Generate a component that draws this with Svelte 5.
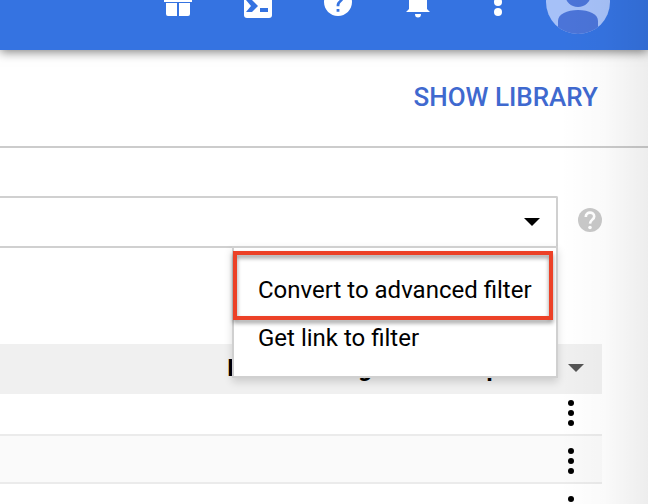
<script lang="ts">
  const rows = [1, 2, 3];
  const menuItems = ["Convert to advanced filter", "Get link to filter"];

  let filter = $state("");
  let menuOpen = $state(true);
</script>

<div class="page">
  <header class="topbar">
    <button class="icon-btn" aria-label="Gifts">
      <svg width="28" height="28" viewBox="0 0 28 28" fill="#fff">
        <path d="M0 6h28v8H0zM2 15h11v13H4a2 2 0 0 1-2-2zM15 15h11v11a2 2 0 0 1-2 2h-9z" />
        <path d="M14 5C11-1 5 0 7 5zM14 5c3-6 9-5 7 0z" />
      </svg>
    </button>
    <button class="icon-btn" aria-label="Cloud shell">
      <svg width="28" height="32" viewBox="0 0 28 32">
        <rect width="28" height="32" rx="3" fill="#fff" />
        <path d="M2 14h6l6 6-6 6H2l5-6z" fill="#3573e1" />
        <rect x="16" y="22" width="8" height="4" fill="#3573e1" />
      </svg>
    </button>
    <button class="icon-btn" aria-label="Help">
      <svg width="28" height="28" viewBox="2 2 20 20" fill="#fff">
        <path d="M12 2C6.480 2 2 6.480 2 12s4.480 10 10 10 10-4.480 10-10S17.520 2 12 2zm1 17h-2v-2h2v2zm2.070-7.750l-.9.920C13.450 12.900 13 13.500 13 15h-2v-.5c0-1.100.450-2.100 1.170-2.830l1.240-1.260c.370-.360.590-.860.590-1.410 0-1.100-.9-2-2-2s-2 .9-2 2H8c0-2.210 1.790-4 4-4s4 1.790 4 4c0 .880-.360 1.680-.930 2.250z" />
      </svg>
    </button>
    <button class="icon-btn" aria-label="Notifications">
      <svg width="24" height="32" viewBox="0 0 24 32" fill="#fff">
        <path d="M12 0a2 2 0 0 1 2 2v2c5 1 7 5 7 9v10l3 3H0l3-3V13c0-4 2-8 7-9V2a2 2 0 0 1 2-2zM9 28h6a3 3.500 0 0 1-6 0z" />
      </svg>
    </button>
    <button class="icon-btn" aria-label="More options">
      <svg width="8" height="28" viewBox="0 0 8 28" fill="#fff">
        <circle cx="4" cy="4" r="4" />
        <circle cx="4" cy="14" r="4" />
        <circle cx="4" cy="24" r="4" />
      </svg>
    </button>
    <button class="icon-btn" aria-label="Account">
      <svg width="64" height="64" viewBox="0 0 64 64">
        <clipPath id="avatar"><circle cx="32" cy="32" r="32" /></clipPath>
        <g clip-path="url(#avatar)">
          <rect width="64" height="64" fill="#a6c1f8" />
          <circle cx="32" cy="24" r="13" fill="#4b74d8" />
          <path d="M12 64V51c0-7 9-11 20-11s20 4 20 11v13z" fill="#4b74d8" />
        </g>
      </svg>
    </button>
  </header>

  <div class="actions">
    <button class="library">SHOW LIBRARY</button>
  </div>

  <div class="filter-row">
    <div class="field">
      <input type="text" aria-label="Filter" bind:value={filter} />
      <button
        class="toggle"
        aria-label="Filter options"
        aria-expanded={menuOpen}
        onclick={() => (menuOpen = !menuOpen)}
      >
        <svg width="16" height="8" viewBox="0 0 16 8"><path d="M0 0h16L8 8z" /></svg>
      </button>
      {#if menuOpen}
        <div class="menu">
          {#each menuItems as item}
            <button class="menu-item">{item}</button>
          {/each}
          <div class="callout"></div>
        </div>
      {/if}
    </div>
    <button class="icon-btn help" aria-label="Filter help">
      <svg width="24" height="24" viewBox="2 2 20 20" fill="#c9c9c9">
        <circle cx="12" cy="12" r="10" />
        <path d="M8.500 9.500c0-5 7-4.600 7-.5 0 2.500-3.300 2.900-3.500 6" fill="none" stroke="#fff" stroke-width="2.200" />
        <circle cx="12" cy="18.200" r="1.500" fill="#fff" />
      </svg>
    </button>
  </div>

  <div class="table-wrap">
    <table>
      <thead>
        <tr>
          <th></th>
          <th class="charges">Invoice charges in each period</th>
          <th class="end">
            <button class="icon-btn" aria-label="Sort">
              <svg width="16" height="8" viewBox="0 0 16 8" fill="#555"><path d="M0 0h16L8 8z" /></svg>
            </button>
          </th>
        </tr>
      </thead>
      <tbody>
        {#each rows as row (row)}
          <tr>
            <td></td>
            <td></td>
            <td class="end">
              <button class="icon-btn" aria-label="Row actions">
                <svg width="6" height="26" viewBox="0 0 6 26">
                  <circle cx="3" cy="3" r="3" />
                  <circle cx="3" cy="13" r="3" />
                  <circle cx="3" cy="23" r="3" />
                </svg>
              </button>
            </td>
          </tr>
        {/each}
      </tbody>
    </table>
  </div>

  <div class="edge"></div>
</div>

<style>
  :global(body) {
    margin: 0;
    background: #fff;
  }

  .page {
    position: relative;
    height: 100vh;
    overflow: hidden;
    display: flex;
    flex-direction: column;
    font-family: Roboto, "Liberation Sans", sans-serif;
    font-size: 24px;
    color: #000;
  }

  button {
    padding: 0;
    border: 0;
    background: none;
    font: inherit;
    color: inherit;
    cursor: pointer;
  }

  svg {
    display: block;
  }

  .icon-btn {
    display: flex;
    align-items: center;
    justify-content: center;
  }

  .topbar {
    height: 96px;
    margin-top: -46px;
    padding-right: 30px;
    flex-shrink: 0;
    display: flex;
    align-items: center;
    justify-content: flex-end;
    background: #3573e1;
    box-shadow: 0 2px 10px rgba(0, 0, 0, 0.5);
  }

  .topbar .icon-btn {
    width: 80px;
    height: 80px;
  }

  .actions {
    height: 96px;
    padding-right: 50px;
    flex-shrink: 0;
    display: flex;
    align-items: center;
    justify-content: flex-end;
    border-bottom: 2px solid #ccc;
  }

  .library {
    padding-bottom: 2px;
    font-size: 26px;
    font-weight: 500;
    color: #3f69cf;
  }

  .filter-row {
    display: flex;
    align-items: center;
    padding: 48px 46px 96px 0;
    gap: 20px;
  }

  .field {
    position: relative;
    flex: 1;
    display: flex;
    border: 2px solid #d0d0d0;
    border-left: 0;
    border-radius: 0 2px 0 0;
  }

  .field input {
    flex: 1;
    min-width: 0;
    height: 48px;
    padding: 0 16px;
    box-sizing: border-box;
    border: 0;
    outline: 0;
    font: inherit;
    background: none;
  }

  .toggle {
    padding: 0 16px;
  }

  .help {
    padding-bottom: 4px;
  }

  .menu {
    position: absolute;
    top: 100%;
    right: -2px;
    z-index: 1;
    width: 326px;
    padding: 18px 0 14px;
    box-sizing: border-box;
    display: flex;
    flex-direction: column;
    background: #fff;
    border: 2px solid #d0d0d0;
    box-shadow: 0 4px 8px rgba(0, 0, 0, 0.15);
  }

  .menu-item {
    height: 48px;
    padding: 0 24px;
    text-align: left;
    white-space: nowrap;
  }

  .callout {
    position: absolute;
    inset: 3px 3px 56px -1px;
    border: 4px solid #ec4127;
    filter: drop-shadow(0 3px 2px rgba(0, 0, 0, 0.4));
    pointer-events: none;
  }

  .table-wrap {
    padding-right: 46px;
  }

  table {
    width: 100%;
    table-layout: fixed;
    border-collapse: collapse;
  }

  th {
    height: 48px;
    padding: 0 0 2px;
    background: #f0f0f0;
    font-weight: 700;
    text-align: left;
    white-space: nowrap;
  }

  .charges {
    width: 341px;
  }

  th.end {
    width: 34px;
  }

  tbody td {
    height: 46px;
    padding: 0;
    border-bottom: 2px solid #ebebeb;
  }

  tbody tr:first-child td {
    height: 40px;
  }

  tbody .end {
    padding-bottom: 8px;
    box-sizing: border-box;
    vertical-align: bottom;
  }

  tbody tr:nth-child(even) {
    background: #fafafa;
  }

  .edge {
    position: absolute;
    inset: 0 0 0 auto;
    z-index: 2;
    width: 88px;
    background: linear-gradient(to right, transparent, rgba(0, 0, 0, 0.02) 50%, rgba(0, 0, 0, 0.07));
    pointer-events: none;
  }
</style>
